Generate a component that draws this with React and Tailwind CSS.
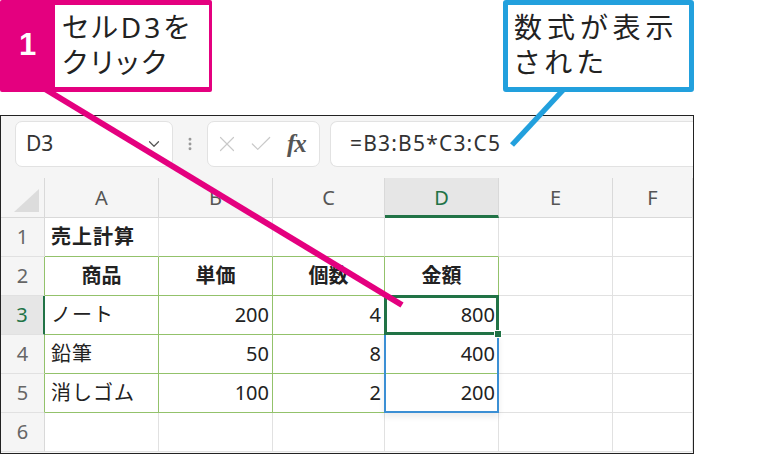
import { Check, ChevronDown, EllipsisVertical, X } from "lucide-react";
import clsx from "clsx";

const GRID = "border-[#e1e1e1]";
const TBL = "border-[#93c26b]";

const rows = [
  { n: 1, cells: [{ t: "売上計算", bold: true }, {}, {}, {}, {}, {}] },
  { n: 2, head: true, cells: [{ t: "商品" }, { t: "単価" }, { t: "個数" }, { t: "金額" }, {}, {}] },
  { n: 3, cells: [{ t: "ノート" }, { t: "200", r: true }, { t: "4", r: true }, { t: "800", r: true }, {}, {}] },
  { n: 4, cells: [{ t: "鉛筆" }, { t: "50", r: true }, { t: "8", r: true }, { t: "400", r: true }, {}, {}] },
  { n: 5, cells: [{ t: "消しゴム" }, { t: "100", r: true }, { t: "2", r: true }, { t: "200", r: true }, {}, {}] },
  { n: 6, cells: [{}, {}, {}, {}, {}, {}] },
];

const Callouts = () => (
  <div className="flex justify-between items-start w-[694px] h-[115px]">
    <div className="flex w-[212px] h-[92px] bg-[#e4007f] rounded-[2px]">
      <div className="w-[55px] flex items-center justify-center text-white font-bold text-[31px] font-['Liberation_Sans',sans-serif] pb-[2px]">
        1
      </div>
      <div className="flex-1 bg-white mt-[5px] mb-[5px] mr-[3px] pl-[7px] pt-[5px] text-[28px] leading-[35px] tracking-[3px] text-[#222] [font-feature-settings:'palt']">
        セルD3を
        <br />
        クリック
      </div>
    </div>
    <div className="w-[191px] h-[92px] border-[5px] border-[#22a0dd] rounded-[3px] bg-white pl-[6px] pt-[5px] text-[28px] leading-[35px] tracking-[5px] text-[#222] [font-feature-settings:'palt']">
      数式が表示
      <br />
      された
    </div>
  </div>
);

const Toolbar = () => (
  <div className="h-[62px] flex items-start pt-[5px] pl-[14px]">
    <div className="w-[158px] h-[46px] bg-white border border-[#e2e2e2] rounded-[7px] flex items-center justify-between pl-[10px] pr-[9px]">
      <span className="text-[21px] text-[#333] font-['Noto_Sans',sans-serif]">D3</span>
      <ChevronDown size={18} strokeWidth={1.6} className="text-[#555]" />
    </div>
    <div className="w-[34px] h-[46px] flex items-center justify-center">
      <EllipsisVertical size={16} strokeWidth={2.4} className="text-[#999]" />
    </div>
    <div className="w-[113px] h-[46px] bg-white border border-[#e2e2e2] rounded-[7px] flex items-center pl-[6px] gap-[8px]">
      <X size={26} strokeWidth={1.1} className="text-[#c9c9c9]" />
      <Check size={26} strokeWidth={1.1} className="text-[#c9c9c9]" />
      <span className="ml-[5px] text-[25px] italic font-bold text-[#555] font-['Liberation_Serif',serif] tracking-[-1px]">fx</span>
    </div>
    <div className="flex-1 ml-[10px] h-[46px] bg-white border border-r-0 border-[#e2e2e2] rounded-l-[7px] flex items-center pl-[19px]">
      <span className="text-[21px] tracking-[1.2px] text-[#333] font-['Noto_Sans',sans-serif]">=B3:B5*C3:C5</span>
    </div>
  </div>
);

const HeaderRow = () => (
  <>
    <div className="relative bg-[#f5f5f5] border-r border-b border-[#d9d9d9]">
      <div className="absolute right-[5px] bottom-[5px] w-0 h-0 border-l-[25px] border-l-transparent border-b-[23px] border-b-[#dcdcdc]" />
    </div>
    {["A", "B", "C", "D", "E", "F"].map((c) => (
      <div
        key={c}
        className={clsx(
          "flex items-center justify-center text-[20px] border-r",
          c === "D"
            ? "bg-[#e6e6e6] text-[#217346] border-b-[3px] border-b-[#217346] border-r-[#d9d9d9] pt-[3px]"
            : "bg-[#f5f5f5] text-[#555] border-b border-[#d9d9d9]"
        )}
      >
        {c}
      </div>
    ))}
  </>
);

const Row = ({ row }) => {
  const sel = row.n === 3;
  const inTbl = row.n >= 2 && row.n <= 5;
  return (
    <>
      <div
        className={clsx(
          "flex items-center justify-center text-[20px] border-b border-b-[#e1e1e1]",
          sel ? "bg-[#e6e6e6] text-[#217346] border-r-2 border-r-[#217346]" : "bg-[#f5f5f5] text-[#666] border-r",
          !sel && (inTbl ? "border-r-[#93c26b]" : "border-r-[#d9d9d9]")
        )}
      >
        {row.n}
      </div>
      {row.cells.map((cell, i) => {
        const tbl = i < 4 && inTbl;
        const r1 = row.n === 1 && i < 4;
        return (
          <div
            key={i}
            className={clsx(
              "relative flex items-center border-r border-b text-[20px] text-[#222] whitespace-nowrap bg-white",
              tbl ? TBL : GRID,
              r1 && "border-b-[#93c26b]",
              row.head && i < 4 && "bg-[#d3e4c5] justify-center font-bold",
              !row.head && (cell.r ? "justify-end pr-[3px]" : "pl-[6px] tracking-[1px]"),
              cell.bold && "font-bold tracking-[0px]"
            )}
          >
            {cell.t}
            {sel && i === 3 && (
              <div className="absolute -left-px -top-px -right-px -bottom-px border-[3px] border-[#217346] z-20">
                <div className="absolute -right-[6px] -bottom-[6px] w-[8px] h-[8px] bg-[#217346] border border-white" />
              </div>
            )}
            {row.n === 4 && i === 3 && (
              <div className="absolute -left-px -top-px -right-px h-[79px] border-2 border-t-0 border-[#3b8fd4] z-10 shadow-[0_4px_6px_rgba(0,0,0,0.08)]" />
            )}
          </div>
        );
      })}
    </>
  );
};

const App = () => {
  return (
    <div className="relative w-[783px] h-[455px] bg-white overflow-hidden font-['Noto_Sans','Noto_Sans_CJK_JP',sans-serif]">
      <Callouts />
      <div className="w-[694px] h-[339px] border border-[#222] bg-[#f5f5f5] flex flex-col">
        <Toolbar />
        <div className="grid grid-cols-[44px_114px_114px_112px_114px_114px_1fr] grid-rows-[40px_repeat(6,39px)] bg-white">
          <HeaderRow />
          {rows.map((row) => (
            <Row key={row.n} row={row} />
          ))}
        </div>
      </div>
      <svg className="absolute inset-0 z-30 pointer-events-none" width="783" height="455">
        <line x1="45" y1="89" x2="402" y2="305" stroke="#e4007f" strokeWidth="6" />
        <line x1="564" y1="89" x2="512" y2="145" stroke="#22a0dd" strokeWidth="5.5" />
      </svg>
    </div>
  );
};

export default App;
